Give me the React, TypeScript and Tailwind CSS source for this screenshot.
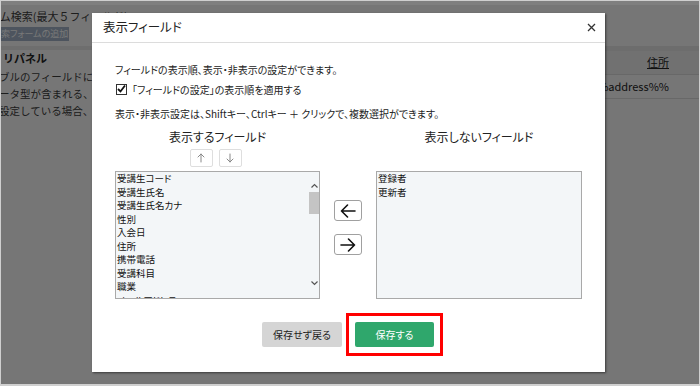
import React from 'react';

const shown = ['受講生コード', '受講生氏名', '受講生氏名カナ', '性別', '入会日', '住所', '携帯電話', '受講科目', '職業', 'メールアドレス'];
const hidden = ['登録者', '更新者'];

function ArrowLeft() {
  return (
    <svg width="16" height="14" viewBox="0 0 16 14" fill="none" stroke="#111" strokeWidth="1.6" strokeLinecap="round" strokeLinejoin="round">
      <path d="M15 7H1.5M7.5 1L1.5 7l6 6" />
    </svg>
  );
}

function ArrowRight() {
  return (
    <svg width="16" height="14" viewBox="0 0 16 14" fill="none" stroke="#111" strokeWidth="1.6" strokeLinecap="round" strokeLinejoin="round">
      <path d="M1 7h13.5M8.5 1l6 6-6 6" />
    </svg>
  );
}

function SmallArrow({ up }: { up?: boolean }) {
  return (
    <svg width="8" height="10" viewBox="0 0 8 10" fill="none" stroke="#888" strokeWidth="1" strokeLinecap="round">
      {up ? <path d="M4 9V1M1 4l3-3 3 3" /> : <path d="M4 1v8M1 6l3 3 3-3" />}
    </svg>
  );
}

function ListBox({ items, scroll }: { items: string[]; scroll?: boolean }) {
  return (
    <div className="flex h-[128px] border border-[#a9a9a9] bg-[#f3f6f8] overflow-hidden">
      <div className="flex-1 pl-[1px] text-[9.5px] leading-[13.5px] text-[#111]">
        {items.map((it) => (
          <div key={it} className="whitespace-nowrap">{it}</div>
        ))}
      </div>
      {scroll && (
        <div className="w-[10px] flex flex-col items-center bg-[#f3f6f8]">
          <svg className="mt-[11px]" width="7" height="5" viewBox="0 0 7 5" fill="none" stroke="#555" strokeWidth="1.2">
            <path d="M0.5 4.5L3.5 1.5l3 3" />
          </svg>
          <div className="mt-[4px] w-[10px] h-[22px] bg-[#c4c4c4]" />
          <div className="flex-1" />
          <svg className="mb-[12px]" width="7" height="5" viewBox="0 0 7 5" fill="none" stroke="#555" strokeWidth="1.2">
            <path d="M0.5 0.5l3 3 3-3" />
          </svg>
        </div>
      )}
    </div>
  );
}

export default function App() {
  return (
    <div className="relative w-[700px] h-[386px] overflow-hidden border border-b-2 border-[#cfcfcf] bg-[#ececec] font-['Noto_Sans_CJK_JP',sans-serif]">
      {/* page behind the dialog */}
      <div className="h-[4px] bg-white" />
      <div className="flex justify-between">
        <div className="w-[260px]">
          <div className="h-[22px] flex items-center -ml-[34px] text-[11px] text-[#3a3a3a] whitespace-nowrap">フォーム検索(最大５フィールド)</div>
          <div className="w-[68px] h-[14px] bg-[#9aa9bc] text-[9px] leading-[14px] text-[#f0f0f0] whitespace-nowrap overflow-hidden [font-feature-settings:'palt']">索フォームの追加</div>
          <div className="mt-[5px] h-[4px] bg-[#dcdcdc]" />
          <div className="h-[16px] flex items-center ml-[2px] text-[11px] font-bold text-[#222] whitespace-nowrap">リパネル</div>
          <div className="-ml-[2px] mt-[2px] text-[10.5px] leading-[17px] text-[#3a3a3a] whitespace-nowrap">
            <div>ブルのフィールドに選択</div>
            <div>ータ型が含まれる、また</div>
            <div>設定している場合、設置</div>
          </div>
        </div>
        <div className="w-[110px] pt-[41px]">
          <div className="h-[5px] bg-[#dadada]" />
          <div className="h-[23px] bg-[#e2e2e2] flex items-center justify-end pr-[30px] text-[11px] text-[#222] underline">住所</div>
          <div className="h-[25px] border-y border-[#d0d0d0] flex items-center -ml-[1px] text-[11px] text-[#222] whitespace-nowrap">%%address%%</div>
        </div>
      </div>

      {/* overlay */}
      <div className="absolute inset-0 bg-black/50 pl-[91px] pt-[12px]">
        <div className="w-[513px] h-[359px] bg-white shadow-[1px_1px_2px_rgba(0,0,0,0.5)] flex flex-col [font-feature-settings:'palt']">
          <div className="h-[30px] border-b border-[#dcdcdc] flex items-center justify-between pl-[11px] pr-[9px]">
            <span className="text-[12.5px] text-[#222]">表示フィールド</span>
            <svg width="9" height="9" viewBox="0 0 9 9" stroke="#333" strokeWidth="1.3">
              <path d="M1 1l7 7M8 1L1 8" />
            </svg>
          </div>
          <div className="pl-[23px] pr-[23px] pt-[20px] text-[10px] text-[#222]">
            <div className="h-[14px] leading-[14px]">フィールドの表示順、表示・非表示の設定ができます。</div>
            <div className="mt-[5px] h-[14px] flex items-center">
              <div className="w-[11px] h-[11px] border border-[#333] bg-white flex items-center justify-center ml-[1px]">
                <svg width="9" height="8" viewBox="0 0 9 8" fill="none" stroke="#111" strokeWidth="1.8">
                  <path d="M1 4l2.5 2.5L8 0.5" />
                </svg>
              </div>
              <span className="ml-[5px]">「フィールドの設定」の表示順を適用する</span>
            </div>
            <div className="mt-[11px] h-[14px] leading-[14px]">表示・非表示設定は、Shiftキー、Ctrlキー ＋ クリックで、複数選択ができます。</div>

            <div className="mt-[8px] flex">
              <div className="w-[205px]">
                <div className="h-[16px] text-center text-[12px] leading-[16px]">表示するフィールド</div>
                <div className="mt-[4px] flex justify-center gap-[6px] pr-[4px]">
                  <div className="w-[23px] h-[18px] border border-[#dedede] rounded-[2px] flex items-center justify-center"><SmallArrow up /></div>
                  <div className="w-[23px] h-[18px] border border-[#dedede] rounded-[2px] flex items-center justify-center"><SmallArrow /></div>
                </div>
                <div className="mt-[4px]"><ListBox items={shown} scroll /></div>
              </div>
              <div className="w-[56px] flex flex-col items-center pt-[71px] gap-[13px]">
                <div className="w-[28px] h-[21px] border border-[#a0a0a0] rounded-[3px] flex items-center justify-center"><ArrowLeft /></div>
                <div className="w-[28px] h-[21px] border border-[#a0a0a0] rounded-[3px] flex items-center justify-center"><ArrowRight /></div>
              </div>
              <div className="w-[206px]">
                <div className="h-[16px] text-center text-[12px] leading-[16px]">表示しないフィールド</div>
                <div className="mt-[26px]"><ListBox items={hidden} /></div>
              </div>
            </div>
          </div>
          <div className="mt-[14px] flex justify-center items-center gap-[4px] pl-[8px]">
            <button className="w-[80px] h-[25px] bg-[#d5d5d5] rounded-[2px] text-[10px] text-[#222]">保存せず戻る</button>
            <div className="border-[3px] border-[#ff0000] p-[6px]">
              <button className="w-[79px] h-[25px] bg-[#2fa76c] rounded-[2px] text-[10px] text-white block">保存する</button>
            </div>
          </div>
        </div>
      </div>
    </div>
  );
}
